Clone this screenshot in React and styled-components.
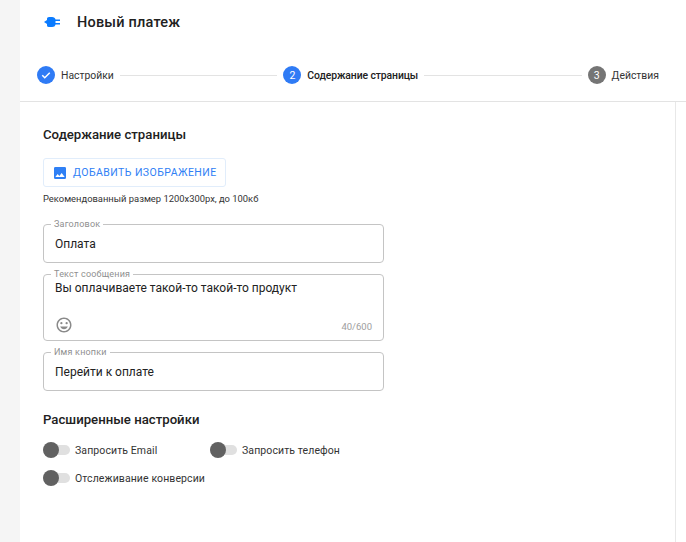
import React from "react";
import styled, { createGlobalStyle } from "styled-components";

const Global = createGlobalStyle`
  html, body { margin: 0; padding: 0; background: #f5f5f5; }
  body { font-family: Roboto, "Liberation Sans", sans-serif; color: #212121; }
`;

const Page = styled.div`
  margin-left: 20px;
  width: 666px;
  height: 542px;
  background: #fff;
  display: flex;
  flex-direction: column;
  overflow: hidden;
`;

const Header = styled.header`
  height: 101px;
  border-bottom: 1px solid #e3e3e3;
  display: flex;
  flex-direction: column;
  flex: none;
`;

const TitleRow = styled.div`
  display: flex;
  align-items: center;
  height: 44px;
  padding-left: 24px;
  gap: 16px;
`;

const Title = styled.h1`
  margin: 0;
  font-size: 14.5px;
  font-weight: 500;
  letter-spacing: 0.2px;
  color: #212121;
`;

const Stepper = styled.div`
  display: flex;
  align-items: center;
  margin-top: 22px;
  height: 18px;
  padding-left: 17px;
  width: 622px;
`;

const Step = styled.div`
  display: flex;
  align-items: center;
  gap: 6px;
  flex: none;
`;

const StepCircle = styled.span`
  width: 18px;
  height: 18px;
  border-radius: 50%;
  background: ${(p) => (p.$muted ? "#757575" : "#2f7bf5")};
  color: #fff;
  font-size: 10.5px;
  display: flex;
  align-items: center;
  justify-content: center;
`;

const StepLabel = styled.span`
  font-size: 10.4px;
  font-weight: ${(p) => (p.$active ? 500 : 400)};
  letter-spacing: ${(p) => (p.$active ? "-0.1px" : "0")};
  color: ${(p) => (p.$active ? "#212121" : "#333")};
`;

const StepLine = styled.span`
  flex: 1;
  height: 1px;
  background: #e3e3e3;
  margin: 1px 6px 0;
`;

const Body = styled.div`
  flex: 1;
  width: 656px;
  border-right: 1px solid #e8e8e8;
  padding: 26px 0 0 23px;
  box-sizing: border-box;
`;

const Column = styled.div`
  width: 341px;
  display: flex;
  flex-direction: column;
`;

const SectionTitle = styled.h2`
  margin: ${(p) => p.$mt || 0}px 0 0;
  font-size: 13.2px;
  line-height: 14px;
  font-weight: 500;
  color: #212121;
`;

const AddImage = styled.button`
  margin-top: 16px;
  align-self: flex-start;
  width: 183px;
  height: 29px;
  box-sizing: border-box;
  background: #fff;
  border: 1px solid #e1edfb;
  border-radius: 3px;
  display: flex;
  align-items: center;
  gap: 5px;
  padding: 0 0 0 8px;
  color: #2f80f5;
  font-family: inherit;
  font-size: 10.5px;
  letter-spacing: 0.45px;
`;

const Hint = styled.p`
  margin: 6px 0 0;
  font-size: 9.4px;
  line-height: 12px;
  color: #333;
`;

const Field = styled.fieldset`
  margin: ${(p) => p.$mt}px 0 0;
  padding: 0 11px;
  height: ${(p) => p.$h}px;
  box-sizing: border-box;
  border: 1px solid #c4c4c4;
  border-radius: 4px;
  min-width: 0;
`;

const Legend = styled.legend`
  padding: 0 3px;
  margin-left: -4px;
  font-size: 9px;
  line-height: 10px;
  letter-spacing: 0.2px;
  color: #8f8f8f;
`;

const Value = styled.div`
  font-size: 12px;
  line-height: 14px;
  margin-top: ${(p) => p.$mt}px;
  color: #222;
`;

const FieldFoot = styled.div`
  margin-top: 21px;
  height: 18px;
  display: flex;
  align-items: center;
  justify-content: space-between;
`;

const Counter = styled.span`
  font-size: 9.5px;
  color: #9e9e9e;
  margin-top: 2px;
`;

const SwitchGrid = styled.div`
  margin-top: 15px;
  display: grid;
  grid-template-columns: 167px auto;
  justify-content: start;
  row-gap: 12px;
`;

const SwitchItem = styled.label`
  display: flex;
  align-items: center;
  gap: 5px;
  height: 16px;
  font-size: 10.5px;
  color: #333;
  letter-spacing: 0.1px;
`;

const Track = styled.span`
  width: 27px;
  height: 10px;
  border-radius: 5px;
  background: #e0e0e0;
  position: relative;
  display: block;
  flex: none;
`;

const Thumb = styled.span`
  position: absolute;
  left: 0;
  top: -3px;
  width: 16px;
  height: 16px;
  border-radius: 50%;
  background: #616161;
`;

const Plug = () => (
  <svg width="17" height="12" viewBox="0 0 17 12" fill="#0a7bff">
    <path d="M0 6 L3 4 V2.5 Q3 1 5 1 H8 Q11 1 11.5 3.5 H16 V5 H11.5 V7 H16 V8.5 H11.5 Q11 11 8 11 H5 Q3 11 3 9.5 V8 Z" />
  </svg>
);

const Check = () => (
  <svg width="12" height="12" viewBox="0 0 24 24" fill="none" stroke="#fff" strokeWidth="3">
    <path d="M4.5 12.5 L9.5 17.5 L19.5 7.5" />
  </svg>
);

const ImageIcon = () => (
  <svg width="16" height="16" viewBox="0 0 24 24" fill="#2f80f5">
    <path d="M21 19V5a2 2 0 0 0-2-2H5a2 2 0 0 0-2 2v14a2 2 0 0 0 2 2h14a2 2 0 0 0 2-2zM8.5 13.5l2.5 3 3.5-4.5 4.5 6H5l3.5-4.5z" />
  </svg>
);

const Smile = () => (
  <svg width="18" height="18" viewBox="0 0 24 24" fill="#8a8a8a">
    <circle cx="15.5" cy="9.5" r="1.5" />
    <circle cx="8.5" cy="9.5" r="1.5" />
    <path d="M11.99 2C6.47 2 2 6.48 2 12s4.47 10 9.99 10C17.52 22 22 17.52 22 12S17.52 2 11.99 2zM12 20c-4.42 0-8-3.58-8-8s3.58-8 8-8 8 3.58 8 8-3.58 8-8 8zm0-2.5c2.33 0 4.31-1.46 5.11-3.5H6.89c.8 2.04 2.78 3.5 5.11 3.5z" />
  </svg>
);

const Toggle = ({ children }) => (
  <SwitchItem>
    <Track>
      <Thumb />
    </Track>
    {children}
  </SwitchItem>
);

export default function App() {
  return (
    <>
      <Global />
      <Page>
        <Header>
          <TitleRow>
            <Plug />
            <Title>Новый платеж</Title>
          </TitleRow>
          <Stepper>
            <Step>
              <StepCircle><Check /></StepCircle>
              <StepLabel>Настройки</StepLabel>
            </Step>
            <StepLine />
            <Step>
              <StepCircle>2</StepCircle>
              <StepLabel $active>Содержание страницы</StepLabel>
            </Step>
            <StepLine />
            <Step>
              <StepCircle $muted>3</StepCircle>
              <StepLabel>Действия</StepLabel>
            </Step>
          </Stepper>
        </Header>
        <Body>
          <Column>
            <SectionTitle>Содержание страницы</SectionTitle>
            <AddImage>
              <ImageIcon />
              ДОБАВИТЬ ИЗОБРАЖЕНИЕ
            </AddImage>
            <Hint>Рекомендованный размер 1200х300px, до 100кб</Hint>
            <Field $mt={14} $h={44}>
              <Legend>Заголовок</Legend>
              <Value $mt={8}>Оплата</Value>
            </Field>
            <Field $mt={6} $h={72}>
              <Legend>Текст сообщения</Legend>
              <Value $mt={2}>Вы оплачиваете такой-то такой-то продукт</Value>
              <FieldFoot>
                <Smile />
                <Counter>40/600</Counter>
              </FieldFoot>
            </Field>
            <Field $mt={6} $h={44}>
              <Legend>Имя кнопки</Legend>
              <Value $mt={8}>Перейти к оплате</Value>
            </Field>
            <SectionTitle $mt={22}>Расширенные настройки</SectionTitle>
            <SwitchGrid>
              <Toggle>Запросить Email</Toggle>
              <Toggle>Запросить телефон</Toggle>
              <Toggle>Отслеживание конверсии</Toggle>
            </SwitchGrid>
          </Column>
        </Body>
      </Page>
    </>
  );
}
